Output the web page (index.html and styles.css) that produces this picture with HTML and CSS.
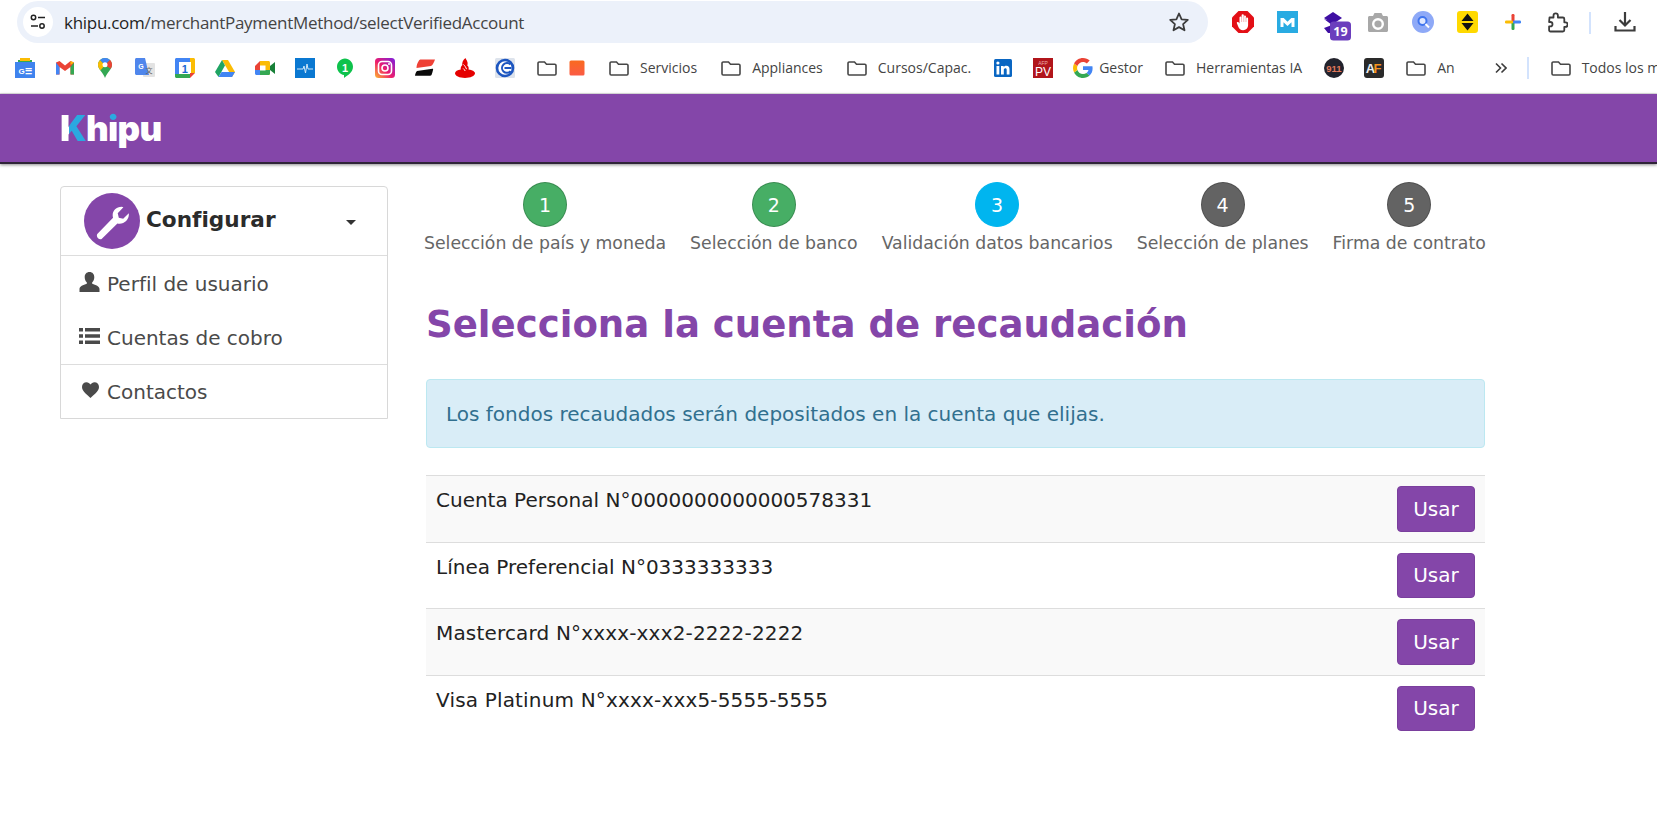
FILE: index.html
```html
<!DOCTYPE html>
<html lang="es">
<head>
<meta charset="utf-8">
<title>Khipu</title>
<link rel="stylesheet" href="styles.css">
</head>
<body>
<svg class="defs" width="0" height="0" aria-hidden="true">
  <symbol id="folder" viewBox="0 0 20 20"><path d="M1 5.200c0-.7.5-1.200 1.200-1.200h5.300l2 2.200h8.300c.7 0 1.200.5 1.200 1.200v8.400c0 .7-.5 1.200-1.200 1.200H2.200c-.7 0-1.200-.5-1.200-1.200z" fill="none" stroke="#474747" stroke-width="1.600"/></symbol>
</svg>
<header class="toolbar">
  <div class="omnibox">
    <span class="tune"><svg width="18" height="16" viewBox="0 0 18 16"><circle cx="4.500" cy="3.500" r="2.200" fill="none" stroke="#222" stroke-width="1.500"/><path d="M9 3.500h7M2 12h7" stroke="#222" stroke-width="1.600"/><circle cx="13" cy="12" r="2.200" fill="none" stroke="#222" stroke-width="1.500"/></svg></span>
    <span class="url"><span class="url-host">khipu.com</span>/merchantPaymentMethod/selectVerifiedAccount</span>
    <svg class="star" width="22" height="22" viewBox="0 0 22 22"><path d="M11 2.500l2.600 5.800 6.200.6-4.700 4.200 1.400 6.200L11 16.100l-5.500 3.200 1.400-6.200L2.200 8.900l6.200-.6z" fill="none" stroke="#3c3c3c" stroke-width="1.800" stroke-linejoin="round"/></svg>
  </div>
  <div class="exts">
    <span class="ext"><svg width="22" height="22" viewBox="0 0 22 22"><path d="M6.500 0h9L22 6.500v9L15.500 22h-9L0 15.500v-9z" fill="#e30f16"/><path d="M4.800 12c0-1 1.200-1.300 1.900-.5l.8 1V6.200a1.100 1.100 0 012.100 0V4.300a1.100 1.100 0 012.200 0v1.400a1.100 1.100 0 012.200 0V7.500a1.050 1.050 0 012.100 0v6.500c0 3-2 5.200-5 5.200-2.600 0-3.800-1.300-4.800-3.500z" fill="#fff"/><path d="M9.600 6v5M11.800 5v6M14 6v5" stroke="#e8868a" stroke-width=".6"/></svg></span>
    <span class="ext"><svg width="21" height="22" viewBox="0 0 21 22"><rect width="21" height="22" fill="#29abe2"/><path d="M3.500 16V7h3.200l3.800 3.800L14.300 7h3.200v9h-3v-4.800l-4 3.800-4-3.800V16z" fill="#fff"/></svg></span>
    <span class="ext ext-cap"><svg width="30" height="30" viewBox="0 0 30 30"><path d="M11 0l9 6-9 6-9-6z" fill="#3f0fa3"/><path d="M2 7l8 6-8 3 4 5h6V10z" fill="#3f0fa3"/><rect x="8" y="9.500" width="21" height="19" rx="3.500" fill="#6b3ebd"/><text x="18.500" y="24.200" class="ext-num">19</text></svg></span>
    <span class="ext"><svg width="20" height="19" viewBox="0 0 20 19"><path d="M6.500 0h7l1.500 3h3.500c.8 0 1.500.7 1.500 1.500v13c0 .8-.7 1.500-1.500 1.500h-17C.7 19 0 18.300 0 17.500v-13C0 3.700.7 3 1.500 3H5z" fill="#a8a8a8"/><circle cx="10" cy="11" r="4.800" fill="none" stroke="#fff" stroke-width="2.400"/></svg></span>
    <span class="ext"><svg width="22" height="22" viewBox="0 0 22 22"><circle cx="11" cy="11" r="11" fill="#8ea9f7"/><circle cx="10.500" cy="10" r="4" fill="#dfe8ff" stroke="#3f74ee" stroke-width="2"/><path d="M13.500 13l3.500 3.500" stroke="#fff" stroke-width="2"/></svg></span>
    <span class="ext"><svg width="21" height="22" viewBox="0 0 21 22"><rect width="21" height="22" rx="3" fill="#ffd900"/><path d="M10.500 2.500l6 7.500h-12zM10.500 19.500l-6-7.500h12z" fill="#111"/></svg></span>
    <span class="ext"><svg width="16" height="16" viewBox="0 0 16 16"><rect x="6.500" y="0" width="3" height="8" rx="1.200" fill="#ea4335"/><rect x="6.500" y="8" width="3" height="8" rx="1.200" fill="#34a853"/><rect x="0" y="6.500" width="8" height="3" rx="1.200" fill="#fbbc04"/><rect x="8" y="6.500" width="8" height="3" rx="1.200" fill="#4285f4"/></svg></span>
    <span class="ext"><svg width="21" height="21" viewBox="0 0 21 21"><path d="M2.500 5.500h4V3.500a2.200 2.200 0 014.400 0v2h5c.8 0 1.400.6 1.400 1.400v3.400h1a2.300 2.300 0 010 4.600h-1v3.200c0 .8-.6 1.400-1.400 1.400H3.500c-.8 0-1.400-.6-1.400-1.400v-3.700h1.200a2.200 2.200 0 000-4.400H2.100z" fill="none" stroke="#3c3c3c" stroke-width="1.800" stroke-linejoin="round"/></svg></span>
  </div>
  <span class="tb-sep"></span>
  <svg class="download" width="22" height="22" viewBox="0 0 22 22"><path d="M11 1v13M5.500 9l5.500 5.500L16.500 9M1.500 15v4.500h19V15" fill="none" stroke="#3c3c3c" stroke-width="2.200"/></svg>
</header>

<nav class="bookmarks">
  <span class="fav"><svg viewBox="0 0 20 20"><path d="M3 2h14v5H3z" fill="#34a853"/><path d="M5 0h10v3H5z" fill="#fbbc04"/><rect y="4" width="20" height="16" fill="#3f83ee"/><text x="10" y="15.500" class="fav-ge">G☰</text></svg></span>
  <span class="fav"><svg viewBox="0 0 20 20"><path d="M1 4.500v12h3.500V9L10 13l5.500-4v7.500H19v-12L15.500 3 10 7.500 4.500 3z" fill="#ea4335"/><path d="M1 4.500v12h3.500V9z" fill="#4285f4"/><path d="M19 4.500v12h-3.500V9z" fill="#34a853"/><path d="M19 4.500L15.500 3v4z" fill="#fbbc04"/></svg></span>
  <span class="fav"><svg viewBox="0 0 20 20"><path d="M10 0c3.900 0 7 3 7 6.800 0 4.700-5 7.700-7 13.200C8 14.500 3 11.500 3 6.800 3 3 6.100 0 10 0z" fill="#34a853"/><path d="M5 2.200A7 7 0 0115 2L10 7z" fill="#4285f4"/><path d="M3 6.800c0-1.800.7-3.400 2-4.600l5 5-4.500 5C4 10.800 3 9 3 6.800z" fill="#fbbc04"/><path d="M15 2c1.300 1.200 2 2.900 2 4.800 0 1.500-.5 2.800-1.300 4L10 7z" fill="#ea4335"/><circle cx="10" cy="6.800" r="2.500" fill="#fff"/></svg></span>
  <span class="fav"><svg viewBox="0 0 20 20"><rect x="8" y="5" width="12" height="14" rx="1" fill="#e3e3e3"/><path d="M0 1.500C0 .7.700 0 1.500 0H10l4 17H1.500C.7 17 0 16.300 0 15.500z" fill="#4f86ec"/><text x="6" y="11" class="fav-g">G</text><text x="14" y="15" class="fav-t">文</text></svg></span>
  <span class="fav"><svg viewBox="0 0 20 20"><rect width="20" height="20" rx="1.500" fill="#fff"/><path d="M0 1.500C0 .7.700 0 1.500 0H15v4H4v12H0z" fill="#4285f4"/><path d="M15 0h3.500c.8 0 1.500.7 1.500 1.500V15h-4V4h-1z" fill="#fbbc04"/><path d="M0 16h15v4H1.500C.7 20 0 19.300 0 18.500z" fill="#34a853"/><path d="M15 15h5l-5 5z" fill="#ea4335"/><text x="9.800" y="14.500" class="fav-cal">1</text></svg></span>
  <span class="fav"><svg viewBox="0 0 20 20"><path d="M7 2h6l7 12-3 5z" fill="#fbbc04"/><path d="M7 2l3 5.500L3.500 19 0 14z" fill="#1fa463"/><path d="M3.500 19L6.500 14H20l-3 5z" fill="#4285f4"/></svg></span>
  <span class="fav"><svg viewBox="0 0 20 20"><path d="M5 3h8.500c.8 0 1.500.7 1.500 1.500v11c0 .8-.7 1.500-1.500 1.500H5z" fill="#fbbc04"/><path d="M5 3L0 8v4h5z" fill="#ea4335"/><path d="M0 12h5v5H1.500C.7 17 0 16.300 0 15.500z" fill="#4285f4"/><path d="M5 12h10v3.500c0 .8-.7 1.500-1.500 1.500H5z" fill="#34a853"/><rect x="5" y="7.500" width="5.500" height="5" fill="#fff"/><path d="M15 8l5-4v12l-5-4z" fill="#188038"/></svg></span>
  <span class="fav"><svg viewBox="0 0 20 20"><rect width="20" height="20" fill="#0a78d1"/><path d="M2 11h6l1-3 1.500 7L12 6l1 5h5" fill="none" stroke="#cfe6f8" stroke-width="1"/></svg></span>
  <span class="fav"><svg viewBox="0 0 20 20"><path d="M10 0.500c4.400 0 8 3.700 8 8.300 0 6-6 8.700-9 11.200v-3C5 16.500 2 13 2 8.800 2 4.200 5.600.5 10 .5z" fill="#0ec24c"/><text x="10" y="13.500" class="fav-one">1</text></svg></span>
  <span class="fav"><svg viewBox="0 0 20 20"><defs><linearGradient id="ig" x1="0" y1="1" x2="1" y2="0"><stop offset="0" stop-color="#fdb92e"/><stop offset=".45" stop-color="#ed1c6e"/><stop offset="1" stop-color="#7a1fe0"/></linearGradient></defs><rect width="20" height="20" rx="3.500" fill="url(#ig)"/><rect x="3.500" y="3.500" width="13" height="13" rx="3.500" fill="none" stroke="#fff" stroke-width="1.600"/><circle cx="10" cy="10" r="3" fill="none" stroke="#fff" stroke-width="1.600"/><circle cx="14" cy="6" r="1" fill="#fff"/></svg></span>
  <span class="fav"><svg viewBox="0 0 20 20"><path d="M4 2.500c.5-.6 1-.9 2-.9h14c-1 2.500-2 5.600-4 6.400l-14.500 2c0-2.500 1-5.500 2.500-7.500z" fill="#ef4136"/><path d="M2 13l15.500-2.200c.5 0 .8.200.6 .8-.4 2-1 4.200-1.600 5.400-.3.500-.7.700-1.500.7H0c.2-1.500.8-3.500 2-4.700z" fill="#0a0a0a"/></svg></span>
  <span class="fav"><svg viewBox="0 0 20 20"><path d="M10.500 0c1 2.500 3 4 1.800 7.500 1.300 1 1.700 2.500 1.200 4 3.700.5 6.500 1.900 6.500 3.800 0 2.600-4.500 4.700-10 4.700S0 17.900 0 15.300c0-1.800 2.500-3.200 5.800-3.700C5.500 10 5.800 8.500 7.300 7c-.5-2.500.8-5 3.200-7z" fill="#e50000"/><path d="M8.500 6.500c1.500 1.500 2.500 3 3 4.700M8.200 10.500c.8.700 1.500 1.500 2 2.500" fill="none" stroke="#fff" stroke-width="1"/></svg></span>
  <span class="fav"><svg viewBox="0 0 20 20"><rect width="20" height="20" rx="1.500" fill="#dde3ec"/><circle cx="10" cy="10" r="8" fill="#fff" stroke="#1d56c0" stroke-width="2.600"/><path d="M15.500 6.500C13.800 4.800 10.500 4.500 8.500 6.500s-2 5 0 7 5.500 1.700 7-.5M9.500 10h7" fill="none" stroke="#1d56c0" stroke-width="2"/></svg></span>
  <span class="fav fav-folder"><svg><use href="#folder"/></svg></span>
  <span class="fav fav-tight"><svg viewBox="0 0 20 20"><defs><linearGradient id="sq" x1="0" y1="0" x2="0" y2="1"><stop offset="0" stop-color="#f96a1f"/><stop offset="1" stop-color="#fb5b45"/></linearGradient></defs><rect x="2.500" y="2.500" width="15" height="15" rx="1.500" fill="url(#sq)"/></svg></span>
  <span class="bm"><svg class="bm-ic"><use href="#folder"/></svg>Servicios</span>
  <span class="bm"><svg class="bm-ic"><use href="#folder"/></svg>Appliances</span>
  <span class="bm"><svg class="bm-ic"><use href="#folder"/></svg>Cursos/Capac.</span>
  <span class="fav"><svg viewBox="0 0 20 20"><rect x="1" y="1" width="18" height="18" rx="1.500" fill="#0a66c2"/><rect x="3.500" y="8" width="2.800" height="8.500" fill="#fff"/><circle cx="4.900" cy="5" r="1.600" fill="#fff"/><path d="M8 8h2.700v1.200c.6-.9 1.600-1.400 2.700-1.400 2.200 0 3.100 1.300 3.100 3.600v5.100h-2.800v-4.600c0-1.100-.4-1.700-1.300-1.700-1 0-1.600.7-1.600 1.800v4.500H8z" fill="#fff"/></svg></span>
  <span class="fav"><svg viewBox="0 0 20 20"><rect width="20" height="20" fill="#b1151b"/><text x="10" y="7" class="fav-afp">AFP</text><text x="10" y="17.500" class="fav-pv">PV</text></svg></span>
  <span class="fav"><svg viewBox="0 0 20 20"><path d="M19.600 10.200c0-.7-.1-1.300-.2-2H10v3.800h5.400c-.2 1.200-1 2.300-2 3l3.200 2.500c1.900-1.700 3-4.300 3-7.300z" fill="#4285f4"/><path d="M10 20c2.700 0 5-.9 6.600-2.400l-3.200-2.500c-.9.600-2 1-3.400 1-2.600 0-4.800-1.800-5.600-4.100l-3.300 2.500C2.800 17.800 6.100 20 10 20z" fill="#34a853"/><path d="M4.400 12c-.2-.6-.3-1.300-.3-2s.1-1.400.3-2L1.100 5.500C.4 6.900 0 8.400 0 10s.4 3.100 1.100 4.500z" fill="#fbbc04"/><path d="M10 4c1.500 0 2.800.5 3.800 1.500l2.900-2.900C15 1 12.700 0 10 0 6.100 0 2.800 2.200 1.100 5.500L4.400 8C5.200 5.700 7.400 4 10 4z" fill="#ea4335"/></svg></span>
  <span class="bm-text bm-gestor">Gestor</span>
  <span class="bm"><svg class="bm-ic"><use href="#folder"/></svg>Herramientas IA</span>
  <span class="fav"><svg viewBox="0 0 20 20"><circle cx="10" cy="10" r="10" fill="#22222c"/><text x="10" y="13.500" class="fav-911">911</text></svg></span>
  <span class="fav"><svg viewBox="0 0 20 20"><rect width="20" height="20" rx="3" fill="#2a2a2a"/><text x="6.500" y="15" class="fav-a">A</text><text x="13.500" y="15" class="fav-f">F</text></svg></span>
  <span class="bm"><svg class="bm-ic"><use href="#folder"/></svg>An</span>
  <svg class="chev" width="12" height="12" viewBox="0 0 12 12"><path d="M1 1.500L5.500 6 1 10.500M6.500 1.500L11 6l-4.500 4.500" fill="none" stroke="#3c3c3c" stroke-width="1.600"/></svg>
  <span class="bm-sep"></span>
  <span class="bm bm-all"><svg class="bm-ic"><use href="#folder"/></svg>Todos los m</span>
</nav>

<div class="brandbar"><span class="logo"><span class="logo-k">K</span>h<span class="logo-i">i</span>pu</span></div>

<main class="page">
  <aside class="side">
    <div class="side-head">
      <span class="wrench"><svg width="37" height="37" viewBox="0 0 34 34"><path d="M3 28.500L17.500 13.500C16 8.500 19.500 3.500 25.500 3.500L27 4 21.800 9.500 22.800 13.500 26.800 14.500 32 9.500C32.500 15.500 27.500 20 21.500 18.800L7 33C5 34.500 1.500 31 3 28.500z" fill="#fff"/></svg></span>
      <span class="side-title">Configurar</span>
      <span class="caret"></span>
    </div>
    <ul class="side-list">
      <li class="side-item"><svg class="side-ic" width="21" height="20" viewBox="0 0 21 20"><path d="M10.500 0c3 0 4.800 2.200 4.800 5.200 0 2.100-.9 4-2.100 5.100v1.500c3.600 1.200 7.300 2.600 7.300 5.200V20H.5v-3c0-2.600 3.700-4 7.300-5.200v-1.500C6.600 9.200 5.700 7.300 5.700 5.200 5.700 2.200 7.500 0 10.500 0z" fill="#4a4a4a"/></svg>Perfil de usuario</li>
      <li class="side-item"><svg class="side-ic" width="21" height="18" viewBox="0 0 21 18"><path d="M0 1h4v3.500H0zM6 1h15v3.500H6zM0 7.200h4v3.500H0zM6 7.200h15v3.500H6zM0 13.500h4V17H0zM6 13.500h15V17H6z" fill="#4a4a4a"/></svg>Cuentas de cobro</li>
      <li class="side-item side-item-sep"><svg class="side-ic" width="21" height="16" viewBox="0 0 21 16"><path d="M11.500 16C9 13.500 3 9.500 3 5c0-2.800 2-4.800 4.500-4.800 1.700 0 3.200.9 4 2.400.8-1.500 2.300-2.400 4-2.400C18 .2 20 2.200 20 5c0 4.500-6 8.500-8.500 11z" fill="#4a4a4a"/></svg>Contactos</li>
    </ul>
  </aside>

  <section class="content">
    <ol class="steps">
      <li class="step"><span class="dot dot-done">1</span><span class="step-label">Selección de país y moneda</span></li>
      <li class="step"><span class="dot dot-done">2</span><span class="step-label">Selección de banco</span></li>
      <li class="step"><span class="dot dot-now">3</span><span class="step-label">Validación datos bancarios</span></li>
      <li class="step"><span class="dot dot-next">4</span><span class="step-label">Selección de planes</span></li>
      <li class="step"><span class="dot dot-next">5</span><span class="step-label">Firma de contrato</span></li>
    </ol>
    <h1 class="title">Selecciona la cuenta de recaudación</h1>
    <div class="alert">Los fondos recaudados serán depositados en la cuenta que elijas.</div>
    <div class="accounts">
      <div class="acct acct-odd"><span class="acct-name">Cuenta Personal N°0000000000000578331</span><button class="btn">Usar</button></div>
      <div class="acct"><span class="acct-name">Línea Preferencial N°0333333333</span><button class="btn">Usar</button></div>
      <div class="acct acct-odd"><span class="acct-name acct-card">Mastercard N°xxxx-xxx2-2222-2222</span><button class="btn">Usar</button></div>
      <div class="acct"><span class="acct-name acct-card">Visa Platinum N°xxxx-xxx5-5555-5555</span><button class="btn">Usar</button></div>
    </div>
  </section>
</main>
</body>
</html>
```

FILE: styles.css
```css
* { box-sizing: border-box; }
html, body { margin: 0; height: 100%; }
body {
  overflow: hidden;
  background: #fff;
  color: #222;
  font-family: "DejaVu Sans", Verdana, sans-serif;
}
.defs { display: block; height: 0; }

/* browser toolbar */
.toolbar {
  height: 47px;
  padding: 1px 0 0 17px;
  display: flex;
  align-items: flex-start;
  font-family: "Open Sans", "Noto Sans", sans-serif;
}
.omnibox {
  width: 1191px;
  height: 42px;
  flex: none;
  background: #ecf1fa;
  border-radius: 21px;
  display: flex;
  align-items: center;
  padding-left: 6px;
}
.tune {
  width: 30px;
  height: 30px;
  border-radius: 50%;
  background: #fff;
  flex: none;
  display: flex;
  align-items: center;
  justify-content: center;
}
.url { margin-left: 11px; font-size: 17px; letter-spacing: -.28px; color: #444; flex: 1; white-space: nowrap; }
.url-host { color: #1f1f1f; }
.star { margin-right: 18px; flex: none; }
.exts { margin-left: 12px; display: flex; height: 42px; align-items: center; flex: none; }
.ext { width: 45px; height: 30px; display: flex; align-items: center; justify-content: center; flex: none; }
.ext-cap { position: relative; top: 5px; padding-left: 8px; }
.ext svg { display: block; flex: none; }
.ext-num { font: bold 12.500px "Open Sans", sans-serif; fill: #fff; text-anchor: middle; }
.tb-sep { width: 2px; height: 22px; margin: 11px 0 0 9px; background: #d3e3fd; flex: none; }
.download { margin: 10px 0 0 23px; flex: none; }

/* bookmarks */
.bookmarks {
  height: 47px;
  padding: 0 0 5px 15px;
  display: flex;
  align-items: center;
  gap: 20px;
  border-bottom: 1px solid #e3e3e3;
  white-space: nowrap;
  font-family: "Open Sans", "Noto Sans", sans-serif;
  font-size: 14px;
  color: #444;
  overflow: hidden;
}
.fav { width: 20px; height: 20px; flex: none; }
.fav svg { display: block; width: 20px; height: 20px; }
.fav-folder { margin-left: 2px; }
.fav-tight { margin-left: -10px; }
.bm { display: flex; align-items: center; gap: 11px; margin: 0 2px; flex: none; }
.bm-ic { width: 20px; height: 20px; flex: none; }
.bm-gestor { margin-left: -14px; flex: none; }
.chev { margin-left: 18px; flex: none; }
.bm-sep { width: 2px; height: 22px; background: #d3e3fd; flex: none; }
.fav-ge { font: bold 8px "Liberation Sans", sans-serif; fill: #fff; text-anchor: middle; }
.fav-g { font: bold 7px "Liberation Sans", sans-serif; fill: #fff; text-anchor: middle; }
.fav-t { font: 7px "Noto Sans CJK SC", sans-serif; fill: #666; text-anchor: middle; }
.fav-cal { font: bold 11px "Liberation Sans", sans-serif; fill: #1967d2; text-anchor: middle; }
.fav-one { font: bold 11px "Liberation Sans", sans-serif; fill: #fff; text-anchor: middle; }
.fav-afp { font: 5px "Liberation Sans", sans-serif; fill: #e9a9a9; text-anchor: middle; }
.fav-pv { font: 12px "Liberation Sans", sans-serif; fill: #fff; text-anchor: middle; }
.fav-911 { font: bold 9.500px "Liberation Sans", sans-serif; fill: #e0785a; text-anchor: middle; }
.fav-a { font: bold 13px "Liberation Sans", sans-serif; fill: #eee; text-anchor: middle; }
.fav-f { font: bold 13px "Liberation Sans", sans-serif; fill: #f7941d; text-anchor: middle; }

/* brand bar */
.brandbar {
  height: 70px;
  background: #8446a9;
  border-bottom: 2px solid #2f2438;
  box-shadow: 0 1px 3px rgba(0, 0, 0, .45);
  padding-left: 60px;
  display: flex;
  align-items: center;
}
.logo { font: 900 35px/1 "Inter", "Lato", sans-serif; color: #fff; letter-spacing: -.7px; }
.logo-k {
  background: linear-gradient(90deg, #fff 34%, #2ba9e0 34%);
  -webkit-background-clip: text;
  background-clip: text;
  color: transparent;
}
.logo-i {
  background: linear-gradient(180deg, #2ba9e0 36%, #fff 36%);
  -webkit-background-clip: text;
  background-clip: text;
  color: transparent;
}

/* page */
.page { display: flex; gap: 38px; padding: 22px 0 0 60px; align-items: flex-start; }
.side { width: 328px; flex: none; border: 1px solid #d8d8d8; border-radius: 4px 4px 0 0; }
.side-head {
  height: 69px;
  display: flex;
  align-items: center;
  padding-left: 23px;
  border-bottom: 1px solid #ddd;
}
.wrench {
  width: 56px;
  height: 56px;
  border-radius: 50%;
  background: #8446a9;
  display: flex;
  align-items: center;
  justify-content: center;
  flex: none;
}
.side-title { margin: -4px 0 0 6px; font-size: 21.600px; font-weight: bold; color: #2b2b2b; }
.caret {
  margin: 3px 0 0 70px;
  border-top: 5px solid #333;
  border-left: 5.500px solid transparent;
  border-right: 5.500px solid transparent;
}
.side-list { list-style: none; margin: 0; padding: 0; }
.side-item {
  height: 54px;
  padding: 1px 0 0 18px;
  display: flex;
  align-items: center;
  gap: 7px;
  font-size: 20px;
  color: #4a4a4a;
}
.side-item-sep { border-top: 1px solid #ddd; }
.side-ic { flex: none; margin-top: -4px; }

.content { width: 1059px; flex: none; }
.steps { list-style: none; margin: -4px 0 0 -2px; padding: 0; display: flex; gap: 24px; }
.step { display: flex; flex-direction: column; align-items: center; flex: none; }
.dot {
  width: 44px;
  height: 45px;
  border-radius: 50%;
  display: flex;
  align-items: center;
  justify-content: center;
  color: #fff;
  font-size: 19px;
  border: 1px solid rgba(0, 0, 0, .2);
}
.dot-done { background: #47ae65; }
.dot-now { background: #00b5ef; border-color: #00b5ef; }
.dot-next { background: #636363; }
.step-label { margin-top: 5px; font-size: 17.300px; line-height: 22px; color: #666; white-space: nowrap; }
.title { margin: 45px 0 28px; font-size: 37.100px; line-height: 52px; font-weight: bold; color: #8446a9; white-space: nowrap; }
.alert {
  height: 69px;
  padding-left: 19px;
  display: flex;
  align-items: center;
  background: #d9edf7;
  border: 1px solid #bce8f1;
  border-radius: 4px;
  color: #31708f;
  font-size: 20px;
}
.accounts { margin-top: 27px; }
.acct {
  display: flex;
  justify-content: space-between;
  align-items: flex-start;
  padding: 10px;
  border-top: 1px solid #ddd;
}
.acct-odd { background: #f9f9f9; }
.acct-name { font-size: 20px; line-height: 28px; color: #222; white-space: nowrap; }
.acct-card { letter-spacing: .17px; }
.btn {
  width: 78px;
  height: 45.500px;
  padding: 0;
  background: #8446a9;
  border: 1px solid #7a3f9d;
  border-radius: 4px;
  color: #fff;
  font-family: inherit;
  font-size: 20px;
}
```
